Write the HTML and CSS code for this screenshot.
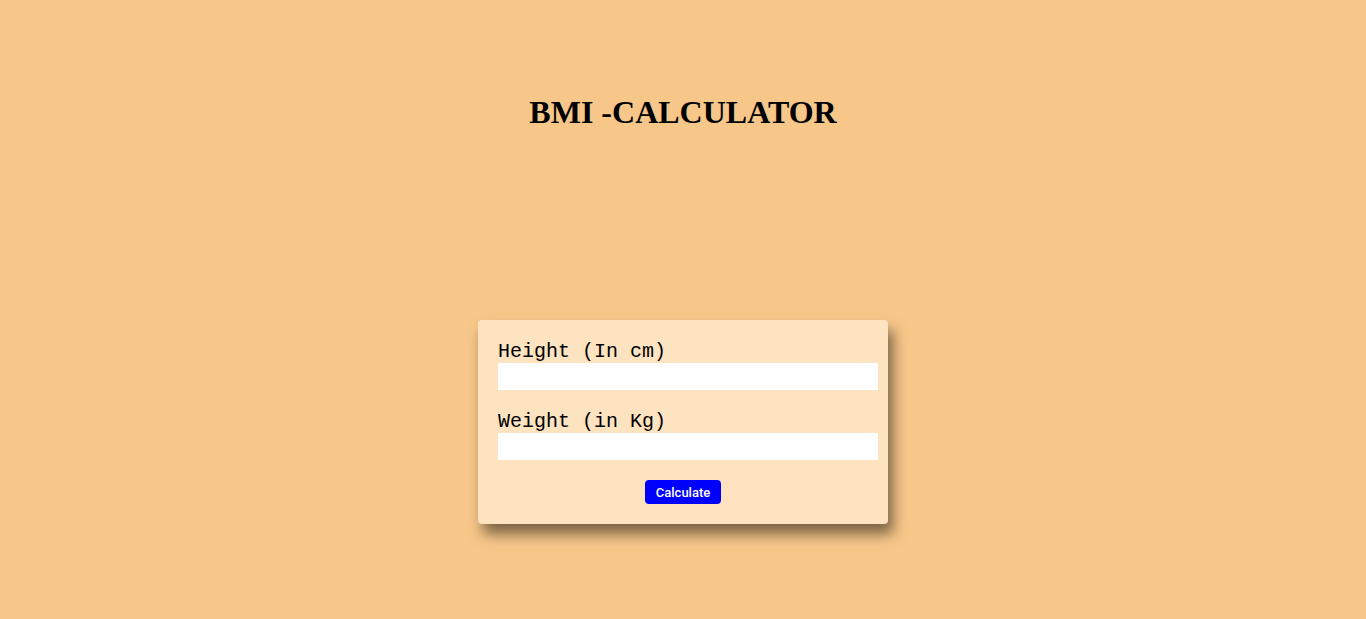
FILE: index.html
```html
<!DOCTYPE html>
<html>
<head>
<meta charset="utf-8">
<link rel="stylesheet" href="styles.css">
</head>
<body>
<h1 class="title">BMI -CALCULATOR</h1>
<div class="card">
  <label class="label" for="h">Height (In cm)</label>
  <input class="field" id="h" type="text">
  <label class="label spaced" for="w">Weight (in Kg)</label>
  <input class="field" id="w" type="text">
  <div class="actions"><button class="btn">Calculate</button></div>
</div>
</body>
</html>
```
FILE: styles.css
```css
html, body { margin: 0; padding: 0; }
body {
  background: #f7c78a;
  min-height: 619px;
  display: flex;
  flex-direction: column;
  align-items: center;
}
.title {
  font-family: "Liberation Serif", "Times New Roman", serif;
  font-size: 32px;
  font-weight: bold;
  line-height: 37px;
  margin: 94px 0 0;
  color: #000;
}
.card {
  margin-top: 189px;
  width: 370px;
  padding: 20px;
  background: #fee3c1;
  border-radius: 4px;
  box-shadow: 5px 10px 14px rgba(0,0,0,0.5);
  display: flex;
  flex-direction: column;
}
.label {
  font-family: "Liberation Mono", "Courier New", monospace;
  font-size: 20px;
  line-height: 23px;
  color: #000;
}
.spaced { margin-top: 20px; }
.field {
  width: 380px;
  height: 27px;
  box-sizing: border-box;
  border: none;
  background: #fff;
  margin: 0;
  padding: 0 4px;
}
.actions {
  margin-top: 20px;
  display: flex;
  justify-content: center;
}
.btn {
  background: #0000ff;
  color: #fff;
  border: none;
  border-radius: 4px;
  font-family: Roboto, "Liberation Sans", Arial, sans-serif;
  font-size: 13px;
  font-weight: 500;
  width: 76px;
  height: 24px;
  padding: 0;
}
```
